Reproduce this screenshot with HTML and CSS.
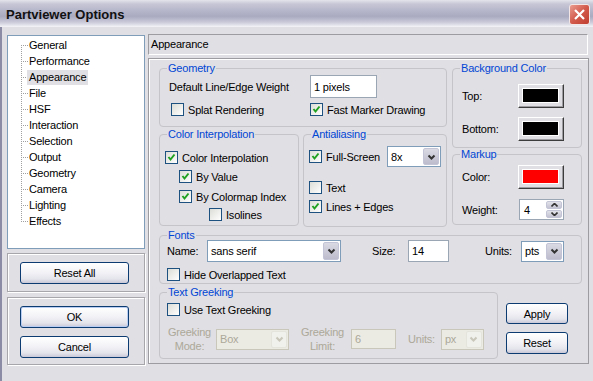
FILE: index.html
```html
<!DOCTYPE html>
<html lang="en">
<head>
    <meta charset="UTF-8">
    <title>Partviewer Options</title>
    <link rel="stylesheet" href="styles.css">
</head>
<body>
<div class="window">
    <div class="titlebar">
        <span class="title">Partviewer Options</span>
        <span class="close-btn">
            <svg width="13" height="13" viewBox="0 0 13 13"><path d="M2 2 L11 11 M11 2 L2 11" stroke="#fff" stroke-width="2.2" fill="none"/></svg>
        </span>
    </div>

    <div class="frame">
        <div class="sidebar">
            <ul class="tree">
                <li><span class="twig"></span><span class="node">General</span></li>
                <li><span class="twig"></span><span class="node">Performance</span></li>
                <li><span class="twig"></span><span class="node selected">Appearance</span></li>
                <li><span class="twig"></span><span class="node">File</span></li>
                <li><span class="twig"></span><span class="node">HSF</span></li>
                <li><span class="twig"></span><span class="node">Interaction</span></li>
                <li><span class="twig"></span><span class="node">Selection</span></li>
                <li><span class="twig"></span><span class="node">Output</span></li>
                <li><span class="twig"></span><span class="node">Geometry</span></li>
                <li><span class="twig"></span><span class="node">Camera</span></li>
                <li><span class="twig"></span><span class="node">Lighting</span></li>
                <li><span class="twig"></span><span class="node">Effects</span></li>
            </ul>
            <div class="etched reset-box">
                <span class="btn wide">Reset All</span>
            </div>
            <div class="etched ok-box">
                <span class="btn wide default">OK</span>
                <span class="btn wide">Cancel</span>
            </div>
        </div>

        <div class="main">
            <div class="page-title">Appearance</div>
            <div class="panel">
                <div class="panel-top">
                    <div class="col-left">
                        <fieldset class="group geometry">
                            <legend>Geometry</legend>
                            <div class="geo-grid">
                                <span class="geo-label">Default Line/Edge Weight</span>
                                <span class="field geo-input">1 pixels</span>
                                <span class="check splat"><span class="cb"></span>Splat Rendering</span>
                                <span class="check"><span class="cb"><svg viewBox="0 0 11 11"><path d="M2.5 5 L4.5 7.5 L8.5 2.5"/></svg></span>Fast Marker Drawing</span>
                            </div>
                        </fieldset>
                        <div class="pair">
                            <fieldset class="group interp">
                                <legend>Color Interpolation</legend>
                                <span class="check lvl0"><span class="cb"><svg viewBox="0 0 11 11"><path d="M2.5 5 L4.5 7.5 L8.5 2.5"/></svg></span>Color Interpolation</span>
                                <span class="check lvl1 by-value"><span class="cb"><svg viewBox="0 0 11 11"><path d="M2.5 5 L4.5 7.5 L8.5 2.5"/></svg></span>By Value</span>
                                <span class="check lvl1 by-index"><span class="cb"><svg viewBox="0 0 11 11"><path d="M2.5 5 L4.5 7.5 L8.5 2.5"/></svg></span>By Colormap Index</span>
                                <span class="check lvl2"><span class="cb"></span>Isolines</span>
                            </fieldset>
                            <fieldset class="group antialias">
                                <legend>Antialiasing</legend>
                                <div class="aa-row">
                                    <span class="check aa-full"><span class="cb"><svg viewBox="0 0 11 11"><path d="M2.5 5 L4.5 7.5 L8.5 2.5"/></svg></span>Full-Screen</span>
                                    <span class="combo aa-combo"><span class="combo-text">8x</span><span class="drop"><svg viewBox="0 0 9 6"><path d="M1.5 1.5 L4.5 4.5 L7.5 1.5"/></svg></span></span>
                                </div>
                                <span class="check aa-text"><span class="cb"></span>Text</span>
                                <span class="check aa-lines"><span class="cb"><svg viewBox="0 0 11 11"><path d="M2.5 5 L4.5 7.5 L8.5 2.5"/></svg></span>Lines + Edges</span>
                            </fieldset>
                        </div>
                    </div>
                    <div class="col-right">
                        <fieldset class="group bgcolor">
                            <legend>Background Color</legend>
                            <div class="color-row first"><span class="color-label">Top:</span><span class="swatch-btn"><span class="swatch black"></span></span></div>
                            <div class="color-row"><span class="color-label">Bottom:</span><span class="swatch-btn"><span class="swatch black"></span></span></div>
                        </fieldset>
                        <fieldset class="group markup">
                            <legend>Markup</legend>
                            <div class="color-row markup-first"><span class="color-label">Color:</span><span class="swatch-btn"><span class="swatch red"></span></span></div>
                            <div class="color-row weight-row">
                                <span class="color-label">Weight:</span>
                                <span class="spin">
                                    <span class="spin-val">4</span>
                                    <span class="spin-btns">
                                        <span class="spin-btn"><svg viewBox="0 0 7 4"><path d="M0.5 3.5 L3.5 0.5 L6.5 3.5"/></svg></span>
                                        <span class="spin-btn"><svg viewBox="0 0 7 4"><path d="M0.5 0.5 L3.5 3.5 L6.5 0.5"/></svg></span>
                                    </span>
                                </span>
                            </div>
                        </fieldset>
                    </div>
                </div>

                <fieldset class="group fonts">
                    <legend>Fonts</legend>
                    <div class="fonts-row">
                        <span class="name-label">Name:</span>
                        <span class="combo name-combo"><span class="combo-text">sans serif</span><span class="drop"><svg viewBox="0 0 9 6"><path d="M1.5 1.5 L4.5 4.5 L7.5 1.5"/></svg></span></span>
                        <span class="size-label">Size:</span>
                        <span class="field size-input">14</span>
                        <span class="units-label">Units:</span>
                        <span class="combo units-combo"><span class="combo-text">pts</span><span class="drop"><svg viewBox="0 0 9 6"><path d="M1.5 1.5 L4.5 4.5 L7.5 1.5"/></svg></span></span>
                    </div>
                    <span class="check hide-text"><span class="cb"></span>Hide Overlapped Text</span>
                </fieldset>

                <div class="panel-bottom">
                    <fieldset class="group greeking">
                        <legend>Text Greeking</legend>
                        <span class="check use-greek"><span class="cb"></span>Use Text Greeking</span>
                        <div class="greek-row">
                            <span class="off-label mode-label">Greeking<br>Mode:</span>
                            <span class="combo off mode-combo"><span class="combo-text">Box</span><span class="drop"><svg viewBox="0 0 9 6"><path d="M1.5 1.5 L4.5 4.5 L7.5 1.5"/></svg></span></span>
                            <span class="off-label limit-label">Greeking<br>Limit:</span>
                            <span class="field off limit-input">6</span>
                            <span class="off-label gunits-label">Units:</span>
                            <span class="combo off gunits-combo"><span class="combo-text">px</span><span class="drop"><svg viewBox="0 0 9 6"><path d="M1.5 1.5 L4.5 4.5 L7.5 1.5"/></svg></span></span>
                        </div>
                    </fieldset>
                    <div class="side-buttons">
                        <span class="btn apply">Apply</span>
                        <span class="btn reset">Reset</span>
                    </div>
                </div>
            </div>
        </div>
    </div>
</div>
</body>
</html>
```

FILE: styles.css
```css
* {
    margin: 0;
    padding: 0;
    box-sizing: border-box;
}

body {
    background: #e0dfe3;
    font-family: "Liberation Sans", Arial, sans-serif;
    font-size: 11px;
    letter-spacing: -0.2px;
    color: #000;
}

.window {
    width: 593px;
    height: 381px;
    background: #e0dfe3;
    overflow: hidden;
}

/* title bar */
.titlebar {
    height: 27px;
    padding: 2px 3px 0 6px;
    display: flex;
    align-items: center;
    justify-content: space-between;
    background: linear-gradient(#e4e4ec 0, #c6c6d6 15%, #b3b3c8 45%, #a9a9c0 60%, #c9c9d9 82%, #f4f4f8 100%);
}

.title {
    font-size: 13px;
    font-weight: bold;
    letter-spacing: 0;
    color: #111;
}

.close-btn {
    width: 21px;
    height: 21px;
    border: 1px solid #f3e6e6;
    border-radius: 3px;
    display: flex;
    align-items: center;
    justify-content: center;
    background: linear-gradient(135deg, #ea9c90, #d25a4c 50%, #bf3d30);
}

/* body of the dialog */
.frame {
    height: 354px;
    border-left: 2px solid #8b8ba6;
    padding: 7px 0 0 5px;
    display: flex;
    gap: 3px;
}

.sidebar {
    width: 138px;
    display: flex;
    flex-direction: column;
}

.tree {
    list-style: none;
    margin-top: 1px;
    height: 214px;
    background: #fff;
    border: 1px solid #7f9db9;
    padding-top: 1px;
}

.tree li {
    height: 16px;
    display: flex;
    align-items: center;
}

.twig {
    width: 8px;
    height: 16px;
    margin-left: 13px;
    background:
        repeating-linear-gradient(to right, #a0a0a0 0 1px, transparent 1px 2px) 0 8px / 100% 1px no-repeat,
        repeating-linear-gradient(to bottom, #a0a0a0 0 1px, transparent 1px 2px) 0 0 / 1px 100% no-repeat;
}

.tree li:first-child .twig {
    background:
        repeating-linear-gradient(to right, #a0a0a0 0 1px, transparent 1px 2px) 0 8px / 100% 1px no-repeat,
        repeating-linear-gradient(to bottom, #a0a0a0 0 1px, transparent 1px 2px) 0 8px / 1px 8px no-repeat;
}

.tree li:last-child .twig {
    background:
        repeating-linear-gradient(to right, #a0a0a0 0 1px, transparent 1px 2px) 0 8px / 100% 1px no-repeat,
        repeating-linear-gradient(to bottom, #a0a0a0 0 1px, transparent 1px 2px) 0 0 / 1px 9px no-repeat;
}

.node {
    margin-left: -2px;
    padding: 0 2px;
    line-height: 15px;
}

.node.selected {
    background: #e0dfe3;
}

.etched {
    border: 1px solid #a6a6ab;
    box-shadow: inset 1px 1px #fff, 1px 1px #fff;
    display: flex;
    flex-direction: column;
    padding: 8px 0 0 12px;
    gap: 8px;
}

.reset-box {
    margin-top: 4px;
    height: 39px;
}

.ok-box {
    margin-top: 5px;
    height: 68px;
}

/* buttons */
.btn {
    display: flex;
    align-items: center;
    justify-content: center;
    height: 22px;
    border: 1px solid #0c3b72;
    border-radius: 3px;
    background: linear-gradient(#ffffff, #f3f3f7 45%, #e4e4ec 80%, #c9c8d8);
}

.btn.wide {
    width: 109px;
}

.btn.default {
    box-shadow: inset 0 0 0 1px #b9cdf2;
}

/* right side */
.main {
    width: 441px;
}

.page-title {
    width: 440px;
    height: 21px;
    border: 1px solid;
    border-color: #9d9da1 #fff #fff #9d9da1;
    padding-left: 2px;
    line-height: 19px;
}

.panel {
    margin-top: 3px;
    height: 306px;
    border: 1px solid #9d9da1;
    box-shadow: inset 1px 1px #fff;
    padding: 3px 6px 0 10px;
}

.panel-top {
    display: flex;
    gap: 5px;
}

.col-left {
    width: 288px;
    display: flex;
    flex-direction: column;
    gap: 1px;
}

.col-right {
    width: 130px;
    display: flex;
    flex-direction: column;
}

.pair {
    display: flex;
    gap: 4px;
}

/* group boxes */
.group {
    border: 1px solid #c4c4c9;
    border-radius: 4px;
    padding: 0;
    margin: 0;
    min-width: 0;
    display: flex;
    flex-direction: column;
    align-items: flex-start;
}

.group legend {
    margin-left: 7px;
    padding: 0 1px;
    line-height: 13px;
    color: #0046d5;
}

.geometry { height: 65px; }
.interp { width: 140px; height: 98px; }
.antialias { width: 144px; height: 99px; }
.bgcolor { height: 86px; }
.markup { height: 77px; }
.fonts { width: 423px; height: 55px; margin-top: 2px; }

/* check boxes */
.check {
    display: flex;
    align-items: center;
    gap: 4px;
    height: 13px;
    white-space: nowrap;
}

.cb {
    width: 13px;
    height: 13px;
    border: 1px solid #1c5180;
    background: linear-gradient(135deg, #dcdcd7, #fff);
    display: flex;
}

.cb svg {
    width: 11px;
    height: 11px;
    fill: none;
    stroke: #21a121;
    stroke-width: 2;
}

/* fields */
.field {
    display: flex;
    align-items: center;
    background: #fff;
    border: 1px solid #9aa6b4;
    padding-left: 3px;
}

.combo {
    display: flex;
    background: #fff;
    border: 1px solid #7f9db9;
    padding: 1px;
}

.combo-text {
    flex: 1;
    padding-left: 2px;
    display: flex;
    align-items: center;
}

.drop {
    width: 16px;
    border-radius: 2px;
    display: flex;
    align-items: center;
    justify-content: center;
    background: linear-gradient(#dadae4, #bcbccd);
    border: 1px solid #c3c5d6;
}

.drop svg {
    width: 9px;
    height: 6px;
    fill: none;
    stroke: #333;
    stroke-width: 2;
}

/* geometry */
.geo-grid {
    display: grid;
    grid-template-columns: 150px 1fr;
    row-gap: 5px;
    align-items: center;
}

.geo-label { padding-left: 9px; }
.geo-input { width: 67px; height: 23px; }
.splat { margin-left: 11px; }

/* color interpolation */
.lvl0 { margin: 10px 0 0 5px; }
.lvl1 { margin-left: 19px; }
.by-value { margin-top: 6px; }
.by-index { margin-top: 7px; }
.lvl2 { margin: 5px 0 0 49px; }

/* antialiasing */
.aa-row {
    display: flex;
    align-items: center;
    margin: 5px 0 0 5px;
}

.aa-full { width: 78px; }
.aa-combo { width: 54px; height: 21px; }
.aa-text { margin: 14px 0 0 5px; }
.aa-lines { margin: 6px 0 0 5px; }

/* colour buttons */
.color-row {
    display: flex;
    align-items: center;
    margin-top: 9px;
}

.color-row.markup-first { margin-top: 4px; }
.color-row.weight-row { margin-top: 10px; }

.color-label {
    width: 65px;
    padding-left: 9px;
}

.swatch-btn {
    width: 46px;
    height: 24px;
    border: 1px solid;
    border-color: #fff #3c3c3c #3c3c3c #fff;
    box-shadow: inset -1px -1px #9d9da1;
    padding: 3px 4px 4px 3px;
    display: flex;
}

.swatch {
    flex: 1;
    border: 1px solid #fff;
}

.swatch.black { background: #000; }
.swatch.red { background: #ff0000; }

.spin {
    width: 45px;
    height: 21px;
    margin-left: 1px;
    background: #fff;
    border: 1px solid #9aa6b4;
    display: flex;
    padding: 1px;
}

.spin-val {
    flex: 1;
    padding-left: 3px;
    display: flex;
    align-items: center;
}

.spin-btns {
    width: 16px;
    display: flex;
    flex-direction: column;
    gap: 1px;
}

.spin-btn {
    flex: 1;
    border: 1px solid #c3c5d6;
    border-radius: 2px;
    background: linear-gradient(#e2e2ea, #c2c2d2);
    display: flex;
    align-items: center;
    justify-content: center;
}

.spin-btn svg {
    width: 7px;
    height: 4px;
    fill: none;
    stroke: #333;
    stroke-width: 1.6;
}

/* fonts */
.fonts-row {
    display: flex;
    align-items: center;
    margin-top: -2px;
}

.name-label { width: 47px; padding-left: 7px; }
.name-combo { width: 134px; height: 22px; }
.size-label { margin-left: 31px; width: 36px; }
.size-input { width: 41px; height: 22px; }
.units-label { margin-left: 36px; width: 36px; }
.units-combo { width: 43px; height: 21px; }

.hide-text { margin: 6px 0 0 7px; }

/* text greeking */
.panel-bottom {
    display: flex;
    margin-top: 2px;
}

.greeking {
    width: 339px;
    height: 73px;
}

.use-greek { margin: 4px 0 0 7px; }

.greek-row {
    display: flex;
    align-items: center;
    margin-top: 9px;
}

.off-label {
    color: #aca899;
    text-align: center;
    line-height: 14px;
}

.mode-label { width: 45px; margin-left: 7px; }
.mode-combo { width: 73px; height: 21px; margin-left: 4px; }
.limit-label { width: 45px; margin-left: 11px; }
.limit-input { width: 45px; height: 20px; margin-left: 6px; }
.gunits-label { margin-left: 12px; }
.gunits-combo { width: 43px; height: 21px; margin-left: 6px; }

.off {
    color: #aca899;
    border-color: #c9c7ba;
}

.combo.off {
    background: #ebebe4;
}

.combo.off .drop {
    background: #f0f0ec;
    border-color: #e4e4dc;
}

.combo.off .drop svg {
    stroke: #c9c7ba;
}

.field.off {
    background: #ebebe4;
}

.side-buttons {
    margin-left: 8px;
    padding-top: 17px;
    display: flex;
    flex-direction: column;
    gap: 8px;
}

.btn.apply { width: 62px; height: 21px; }
.btn.reset { width: 62px; height: 22px; }
```
